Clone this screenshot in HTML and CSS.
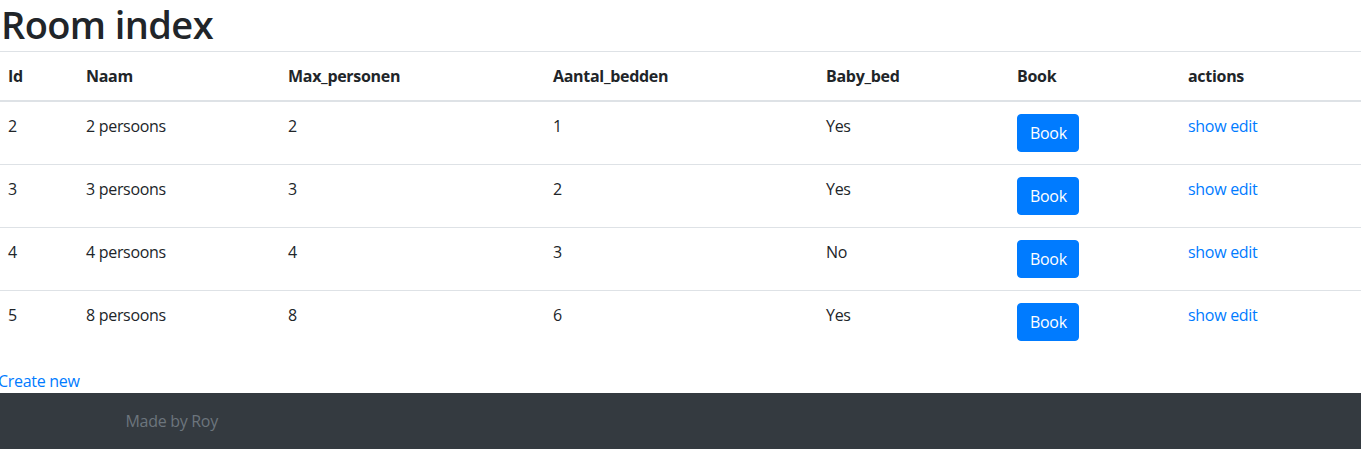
FILE: index.html
```html
<!DOCTYPE html>
<html lang="nl">
<head>
<meta charset="utf-8">
<title>Room index</title>
<link rel="stylesheet" href="styles.css">
</head>
<body>
<main class="content">
  <h1 class="title">Room index</h1>
  <table class="table">
    <colgroup>
      <col class="c-id"><col class="c-naam"><col class="c-max"><col class="c-aantal"><col class="c-baby"><col class="c-book"><col class="c-actions">
    </colgroup>
    <thead>
      <tr><th>Id</th><th>Naam</th><th>Max_personen</th><th>Aantal_bedden</th><th>Baby_bed</th><th>Book</th><th>actions</th></tr>
    </thead>
    <tbody>
      <tr><td>2</td><td>2 persoons</td><td>2</td><td>1</td><td>Yes</td><td><button class="btn">Book</button></td><td><a href="#">show</a> <a href="#">edit</a></td></tr>
      <tr><td>3</td><td>3 persoons</td><td>3</td><td>2</td><td>Yes</td><td><button class="btn">Book</button></td><td><a href="#">show</a> <a href="#">edit</a></td></tr>
      <tr><td>4</td><td>4 persoons</td><td>4</td><td>3</td><td>No</td><td><button class="btn">Book</button></td><td><a href="#">show</a> <a href="#">edit</a></td></tr>
      <tr><td>5</td><td>8 persoons</td><td>8</td><td>6</td><td>Yes</td><td><button class="btn">Book</button></td><td><a href="#">show</a> <a href="#">edit</a></td></tr>
    </tbody>
  </table>
  <a class="create" href="#">Create new</a>
</main>
<footer class="footer">
  <div class="footer-inner">Made by Roy</div>
</footer>
</body>
</html>
```

FILE: styles.css
```css
* { box-sizing: border-box; }
html, body { margin: 0; padding: 0; }
body {
  font-family: "Open Sans", "Noto Sans", sans-serif;
  font-size: 16px;
  line-height: 1.5;
  letter-spacing: -0.3px;
  color: #212529;
  background: #fff;
  overflow: hidden;
}
a { color: #007bff; text-decoration: none; }
.title {
  font-size: 38px;
  font-weight: 600;
  line-height: 48px;
  letter-spacing: -0.6px;
  margin: 0 0 3px 0;
  padding-left: 1px;
}
.table {
  border-collapse: collapse;
  width: calc(100% + 4px);
  margin: 0 0 16px -4px;
  table-layout: fixed;
}
.c-id { width: 78px; }
.c-naam { width: 202px; }
.c-max { width: 265px; }
.c-aantal { width: 273px; }
.c-baby { width: 191px; }
.c-book { width: 171px; }
.table th, .table td {
  padding: 12px;
  text-align: left;
  vertical-align: top;
  border-top: 1px solid #dee2e6;
}
.table th { font-weight: 700; border-bottom: 2px solid #dee2e6; }
.btn {
  font-family: inherit;
  font-size: 16px;
  line-height: 24px;
  letter-spacing: -0.3px;
  padding: 6px 12px;
  color: #fff;
  background: #007bff;
  border: 1px solid #007bff;
  border-radius: 4px;
  display: inline-block;
  vertical-align: top;
  height: 38px;
  width: 62px;
}
.create { display: block; margin-left: -2px; line-height: 24px; }
.footer { background: #343a40; padding: 16px 0; }
.footer-inner {
  max-width: 1140px;
  margin: 0 auto;
  padding: 0 15px;
  color: #6c757d;
}
```
